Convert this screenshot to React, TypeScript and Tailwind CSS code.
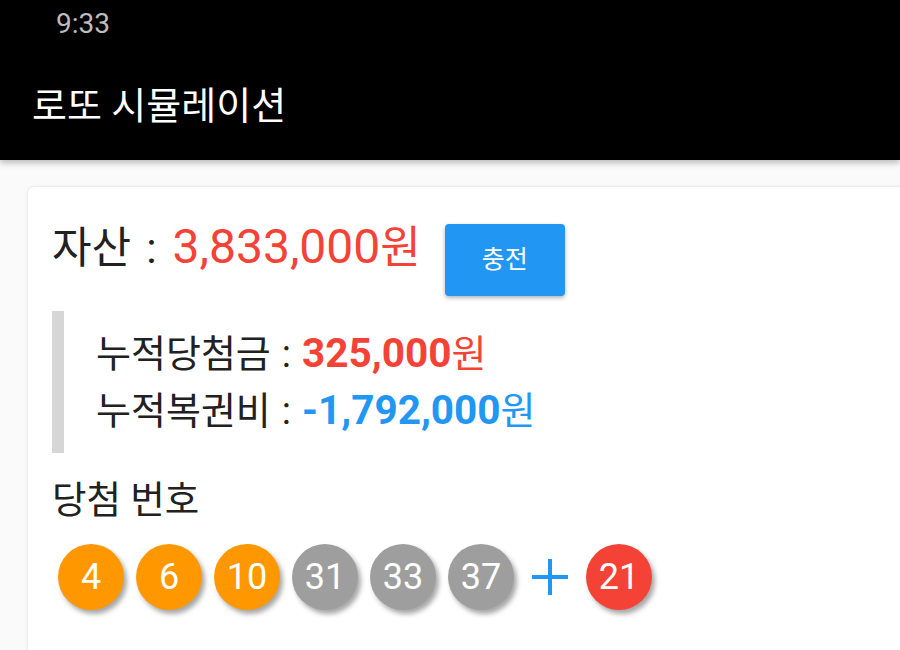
import React from 'react';

const FONT = "font-['Roboto','Noto_Sans_CJK_KR',sans-serif]";

const orange = [4, 6, 10];
const gray = [31, 33, 37];

const Ball = ({ n, color }: { n: number; color: string }) => (
  <div
    className={`w-[66px] h-[66px] rounded-full flex items-center justify-center text-white text-[36px] leading-none shadow-[3px_4px_5px_rgba(0,0,0,0.35)] ${color}`}
  >
    {n}
  </div>
);

export default function App() {
  return (
    <div className={`w-[900px] h-[650px] bg-[#fafafa] overflow-hidden ${FONT}`}>
      {/* App bar */}
      <div className="h-[160px] bg-black shadow-[0_3px_6px_rgba(0,0,0,0.25)] relative">
        <div className="pl-[56px] pt-[7px] text-[28px] leading-[34px] text-[#bdbdbd]">9:33</div>
        <div className="pl-[32px] pt-[42px] text-[38px] leading-[46px] text-white">로또 시뮬레이션</div>
      </div>

      {/* Card */}
      <div className="ml-[28px] mt-[27px] w-[900px] h-[500px] bg-white rounded-tl-md shadow-[0_0_3px_rgba(0,0,0,0.15)] pl-[24px] pt-[34px]">
        <div className="flex items-start">
          <div className="text-[43px] leading-[52px] text-[#212121] whitespace-nowrap flex items-baseline">
            <span>자산</span>
            <span className="ml-[15px] mr-[16px]">:</span>
            <span className="text-[48px] text-[#f44336]">3,833,000</span>
            <span className="text-[44px] text-[#f44336]">원</span>
          </div>
          <button className="ml-[24px] mt-[3px] w-[120px] h-[72px] shrink-0 rounded bg-[#2196f3] text-white text-[25px] shadow-[0_2px_4px_rgba(0,0,0,0.3)]">
            충전
          </button>
        </div>

        <div className="mt-[15px] border-l-[12px] border-[#d6d6d6] pl-[32px] py-[14px] text-[38px] leading-[56px] text-[#212121]">
          <div className="whitespace-nowrap flex items-baseline">
            <span>누적당첨금</span>
            <span className="mx-[11px]">:</span>
            <span className="text-[40.5px] font-bold text-[#f44336]">325,000</span>
            <span className="text-[#f44336]">원</span>
          </div>
          <div className="whitespace-nowrap flex items-baseline">
            <span>누적복권비</span>
            <span className="mx-[11px]">:</span>
            <span className="text-[40.5px] font-bold text-[#2196f3]">-1,792,000</span>
            <span className="text-[#2196f3]">원</span>
          </div>
        </div>

        <div className="mt-[24px] text-[37.5px] leading-[46px] text-[#212121]">당첨 번호</div>

        <div className="mt-[21px] ml-[6px] flex items-center gap-[12px]">
          {orange.map(n => (
            <Ball key={n} n={n} color="bg-[#ff9800]" />
          ))}
          {gray.map(n => (
            <Ball key={n} n={n} color="bg-[#9e9e9e]" />
          ))}
          <svg width="36" height="36" viewBox="0 0 36 36" className="mx-[6px]">
            <rect x="0" y="16" width="36" height="4" fill="#2196f3" />
            <rect x="16" y="0" width="4" height="36" fill="#2196f3" />
          </svg>
          <Ball n={21} color="bg-[#f44336]" />
        </div>
      </div>
    </div>
  );
}
